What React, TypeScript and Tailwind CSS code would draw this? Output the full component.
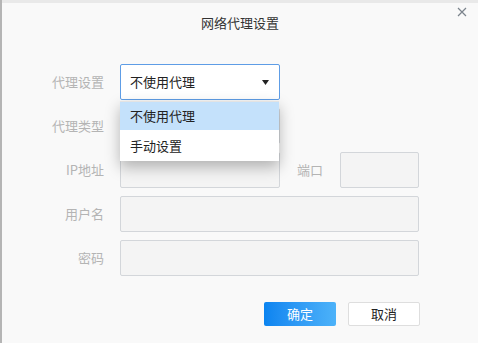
const font = { fontFamily: '"Noto Sans CJK SC", "Noto Sans", sans-serif' };

function Row({ label, children }: { label: string; children: React.ReactNode }) {
  return (
    <div className="flex h-9 items-center">
      <div className="w-[102px] pr-0 text-right text-[13px] text-[#b4b4b4]">{label}</div>
      <div className="ml-4 flex h-full items-center">{children}</div>
    </div>
  );
}

function Field({ w }: { w: string }) {
  return <div className={`h-9 ${w} rounded-[2px] border border-[#d3d6da] bg-[#f4f4f4]`} />;
}

export default function App() {
  return (
    <div className="flex h-[343px] w-[478px] overflow-hidden bg-[#e9e9e9]" style={font}>
      <div className="w-[2px] shrink-0 bg-[#b5b5b5]" />
      <div className="mt-[3px] flex flex-1 flex-col bg-[#f9f9f9]">
        <div className="relative flex h-[44px] items-start justify-center pt-[10px] text-[13px] text-[#333]">
          网络代理设置
          <svg className="absolute right-[11px] top-[4px]" width="10" height="10" viewBox="0 0 10 10">
            <path d="M1 1L9 9M9 1L1 9" stroke="#7b838c" strokeWidth="1.2" />
          </svg>
        </div>
        <div className="mt-[17px] flex flex-col gap-2">
          <Row label="代理设置">
            <div className="relative h-9 w-[160px]">
              <div className="flex h-9 w-[160px] items-center justify-between rounded-[2px] border border-[#5e9de6] bg-white pl-[9px] pr-[10px] text-[13px] text-[#222]">
                <span>不使用代理</span>
                <svg width="7" height="5" viewBox="0 0 7 5">
                  <path d="M0 0H7L3.5 5Z" fill="#222" />
                </svg>
              </div>
              <div className="absolute left-0 top-[37px] z-10 w-[159px] border-t border-[#e3e3e3] bg-white text-[13px] text-[#222] shadow-[0_6px_14px_rgba(0,0,0,0.28)]">
                <div className="flex h-[28px] items-center bg-[#c4e1fb] pl-[10px]">不使用代理</div>
                <div className="flex h-[31px] items-center pl-[10px]">手动设置</div>
              </div>
            </div>
          </Row>
          <Row label="代理类型">
            <Field w="w-[160px]" />
          </Row>
          <Row label="IP地址">
            <Field w="w-[160px]" />
            <div className="w-[60px] text-center text-[13px] text-[#b4b4b4]">端口</div>
            <Field w="w-[79px]" />
          </Row>
          <Row label="用户名">
            <Field w="w-[299px]" />
          </Row>
          <Row label="密码">
            <Field w="w-[299px]" />
          </Row>
        </div>
        <div className="mt-[26px] flex gap-3 pl-[262px]">
          <button className="h-6 w-[72px] rounded-[2px] bg-gradient-to-r from-[#0a84f0] to-[#4cb2f9] text-[13px] text-white">
            确定
          </button>
          <button className="h-6 w-[72px] rounded-[2px] border border-[#dedede] bg-white text-[13px] text-[#222]">
            取消
          </button>
        </div>
      </div>
    </div>
  );
}
